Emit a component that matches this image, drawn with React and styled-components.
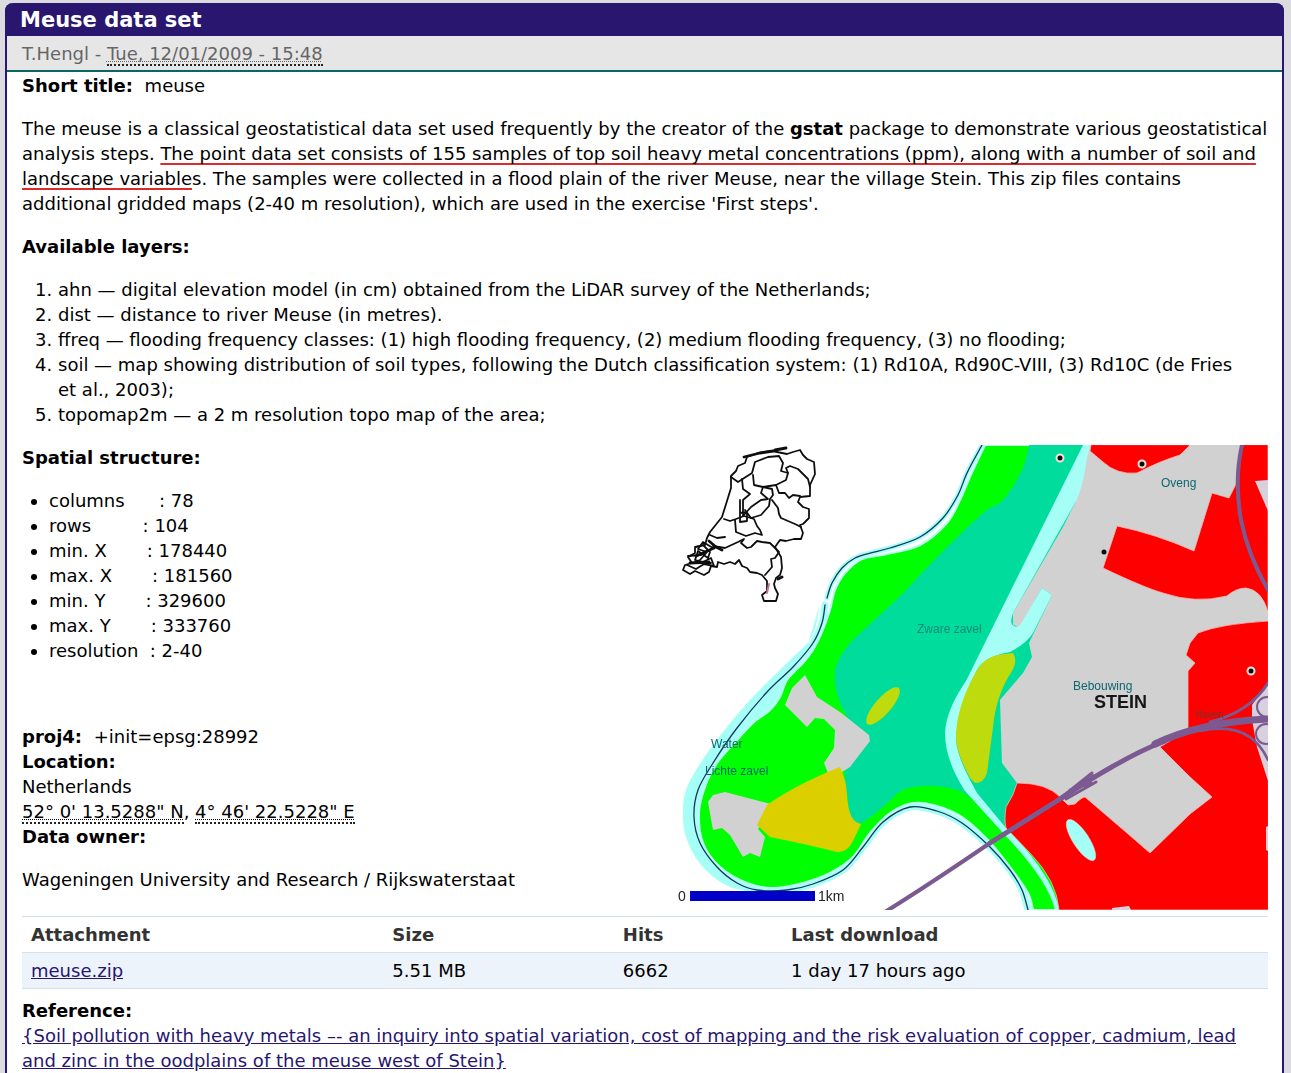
import React from "react";
import styled, { createGlobalStyle } from "styled-components";

const GlobalStyle = createGlobalStyle`
  * { box-sizing: border-box; }
  body {
    margin: 0;
    background: #dcdce0;
    color: #000;
    font-family: Verdana, "DejaVu Sans", sans-serif;
    font-size: 18px;
    line-height: 25px;
  }
`;

const Page = styled.div`
  display: flex;
  min-height: 100vh;
  padding: 3px 7px 0 5px;
`;

const Panel = styled.article`
  flex: 1;
  min-width: 0;
  background: #fff;
  border: solid #28166f;
  border-width: 0 2px;
  border-radius: 8px 8px 0 0;
`;

const Title = styled.h1`
  margin: 0 -2px;
  padding: 5px 15px 3px;
  border-radius: 8px 8px 0 0;
  background: #28166f;
  color: #fff;
  font-size: 21px;
  line-height: 25px;
`;

const Meta = styled.div`
  padding: 5px 15px 4px;
  background: #e6e6e6;
  color: #666;
  border-bottom: 2px solid #0b6661;
`;

const Abbr = styled.abbr`
  text-decoration: underline dotted 1px;
  text-decoration-skip-ink: none;
  border-bottom: 2px dotted #222;
`;

const Content = styled.div`
  padding: 1px 14px 0 15px;
`;

const Paragraph = styled.p`
  margin: ${(p) => (p.$flush ? "0" : "18px 0")};
`;

const Marked = styled.span`
  text-decoration: underline 2px #dd2a2a;
  text-decoration-skip-ink: none;
  text-underline-offset: 3px;
`;

const Value = styled.span`
  margin-left: 6px;
`;

const Numbered = styled.ol`
  margin: 18px 0;
  padding-left: 36px;
`;

const Bulleted = styled.ul`
  margin: 18px 0 61px;
  padding-left: 27px;
`;

const Item = styled.li`
  white-space: pre-wrap;
`;

const Split = styled.section`
  display: flex;
  justify-content: space-between;
  margin-bottom: 6px;
`;

const Details = styled.div`
  flex: 1;
  min-width: 0;
`;

const MapImage = styled.svg`
  display: block;
  flex: none;
  width: 590px;
  height: 465px;
`;

const MapText = styled.text`
  font-family: "Liberation Sans", Arial, sans-serif;
  font-size: ${(p) => p.$size || 12}px;
  font-weight: ${(p) => (p.$bold ? 700 : 400)};
  fill: ${(p) => p.$color || "#0d6670"};
`;

const Table = styled.table`
  width: 100%;
  border-collapse: collapse;
  margin-bottom: 9px;
`;

const HeadCell = styled.th`
  width: ${(p) => p.$width};
  padding: 5px 9px;
  color: #333;
  text-align: left;
  border: solid #d3e1ea;
  border-width: 1px 0;
`;

const Cell = styled.td`
  padding: 5px 9px;
  background: #edf3fa;
  border-bottom: 1px solid #d3e1ea;
`;

const Link = styled.a`
  color: #28166f;
`;

const poly = (points, close = true) =>
  "M" + points.map((p) => p.join(" ")).join("L") + (close ? "Z" : "");

/* Catmull-Rom spline through the given points. */
const curve = (pts) => {
  let d = `M${pts[0].join(" ")}`;
  for (let i = 0; i < pts.length - 1; i += 1) {
    const a = pts[i - 1] || pts[i];
    const b = pts[i];
    const c = pts[i + 1];
    const e = pts[i + 2] || c;
    d += `C${b[0] + (c[0] - a[0]) / 6} ${b[1] + (c[1] - a[1]) / 6} ${c[0] - (e[0] - b[0]) / 6} ${c[1] - (e[1] - b[1]) / 6} ${c[0]} ${c[1]}`;
  }
  return d;
};

const bank = [
  [985,445],[970,477],[960,500],[947,523],[920,545],[887,554],[862,559],[845,573],[835,590],[830,610],
  [822,632],[813,650],[803,663],[787,680],[780,697],[770,710],[753,723],[737,740],[717,763],[705,787],
  [699,813],[703,843],[720,867],[747,883],[773,888],[803,883],[830,873],[853,857],[870,833],[890,813],
  [913,803],[937,806],[962,817],[987,839],[1010,867],[1028,893],[1033,910],
];
const dikeNorth = [
  [982,445],[967,473],[958,495],[943,518],[920,537],[890,548],[870,553],[855,558],[842,568],[832,583],[827,598],
];
const dikeSouth = [
  [825,605],[822,623],[813,643],[793,667],[767,692],[737,728],[713,763],[698,790],[694,817],[700,843],
  [717,867],[737,883],[757,890],[787,890],[813,884],[843,870],[863,847],[883,822],[910,807],[937,811],
  [962,823],[990,847],[1010,870],[1022,890],[1028,910],
];
const water = [
  [820,604],[816,625],[809,641],[787,663],[750,700],[713,745],[688,785],[683,813],[687,840],[703,867],[730,887],[765,893],
];
const teal = [
  [1029,445],[1022,470],[1003,500],[983,513],[937,557],[903,593],[870,624],[850,643],[837,663],[835,683],
  [840,703],[850,725],[848,750],[845,775],[848,800],[851,818],[861,823],[883,807],[903,790],[930,786],[957,790],[975,802],[1004,834],
];

const provinces = [
  [[731,488],[731,476],[736,471],[738,466],[745,463],[747,457],[758,453],[772,451],[787,454],[793,452],[800,450],[803,455],[807,459],[814,462],[815,474],[810,485],[810,496],[800,497],[798,502],[803,507],[809,509],[809,518],[803,524],[800,525],[803,533],[801,539],[794,539],[786,541],[780,540],[775,547],[781,557],[782,568],[780,575],[776,578],[774,584],[775,588],[778,594],[776,601],[764,601],[762,595],[767,591],[767,581],[762,575],[757,573],[750,572],[747,568],[742,566],[739,560],[735,564],[730,562],[724,564],[718,562],[717,567],[711,566],[709,572],[704,575],[695,571],[690,574],[683,570],[685,565],[692,563],[688,557],[695,553],[695,547],[705,545],[707,538],[710,532],[722,517],[727,501]],
  [[731,477],[738,482],[752,473],[755,462],[768,457],[779,456],[783,463],[781,471],[788,473],[786,480],[776,485],[763,487],[754,485],[753,475]],
  [[788,473],[786,468],[790,466],[798,469],[808,479],[810,487]],
  [[776,485],[779,493],[785,493],[789,498],[793,495],[800,496]],
  [[742,479],[743,489],[750,494],[743,500],[743,516],[751,507],[761,500],[768,499],[761,493],[763,487]],
  [[763,487],[772,489],[773,495],[770,499],[769,506],[761,515],[751,518],[745,510]],
  [[724,519],[730,521],[736,519],[744,516],[754,519],[757,526],[760,530],[762,535],[755,533],[746,536],[736,532],[735,520]],
  [[772,500],[778,508],[779,514],[781,518],[795,524],[801,527]],
  [[713,546],[725,548],[738,542],[744,539],[741,543],[747,548],[751,547],[757,541],[762,542],[770,543],[779,552],[775,558],[771,559],[772,567],[765,575]],
  [[710,535],[717,538],[725,537]],
  [[696,547],[703,545],[710,552],[708,558],[698,551],[695,560],[703,562],[711,558],[714,566],[704,564],[696,569],[687,565]],
  [[688,556],[701,555],[713,548],[703,542],[698,549],[707,552],[700,560],[693,563],[711,563]],
  [[740,513],[747,512],[747,521],[740,522],[740,500]],
];

function MeuseMap() {
  return (
    <MapImage viewBox="678 445 590 465" role="img" aria-label="Map of the Meuse study area near Stein">
      <defs>
        <filter id="soft" x="0" y="0" width="100%" height="100%">
          <feGaussianBlur stdDeviation="0.5" />
        </filter>
      </defs>
      <g filter="url(#soft)" strokeLinejoin="round" strokeLinecap="round">
        <rect x="678" y="445" width="590" height="465" fill="#fff" />
        <g fill="none" stroke="#a6fff6">
          <path d={curve(dikeNorth)} strokeWidth="5" />
          <path d={curve(dikeSouth)} strokeWidth="7" />
        </g>
        <path d={`${curve(water)}L800 830L800 670Z`} fill="#a6fff6" />
        <path d={`${curve(bank)}L1268 910L1268 445Z`} fill="#00ff00" stroke="#b8fff2" strokeWidth="2" />
        <path d={`${curve(dikeNorth)}${curve(dikeSouth)}`} fill="none" stroke="#17375e" strokeWidth="1.3" />
        <path d={`${curve(teal)}L1100 820L1100 445Z`} fill="#05dc9b" />

        <path
          d={poly([[1088,445],[1087,453],[1075,503],[1063,527],[1013,613],[1013,625],[1020,627],[1042,588],[1052,595],[1029,643],[1032,657],[1023,673],[1000,700],[1002,763],[1017,783],[1060,830],[1150,870],[1268,870],[1268,445]])}
          fill="#d1d1d1"
        />
        <path
          d="M1083 445L1091 445L1087 457Q1083 488 1075 503L1013 613Q1009 624 1014 626Q1019 628 1022 622L1042 588L1052 595L1033 633Q1027 643 1010 652Q985 656 977 670Q957 709 956 740Q957 755 970 780L977 793L1006 828Q1053 875 1059 910L1055 910Q1048 880 1003 833L965 791Q945 760 945 733Q946 710 966 681Z"
          fill="#a6fff6"
        />
        <path
          d="M977 670Q986 655 1005 654L1013 653Q1018 660 1012 671Q996 695 993 727L987 773Q984 783 975 783L970 778Q955 750 956 735Q957 705 977 670Z"
          fill="#bddb08"
        />

        <g fill="#ff0000" stroke="#f4b8b0" strokeWidth="0.8">
          <path d="M1091 445L1090 451L1103 462Q1117 475 1137 473Q1160 461 1180 455L1190 445Z" />
          <path d="M1241 445L1238 480L1229 498L1212 493L1194 551Q1156 534 1117 526L1103 568Q1145 588 1163 593Q1195 604 1227 596Q1236 588 1246 588Q1262 590 1268 612L1268 445Z" />
          <path d="M1268 621Q1220 624 1198 633L1190 643L1186 655L1195 663L1188 671V730L1160 747L1190 777L1212 797L1190 814L1150 853L1127 833L1085 797Q1082 797 1075 804L1068 805L1060 797Q1047 783 1017 783Q1014 795 1006 807Q1004 820 1006 828L1030 853Q1057 881 1059 910L1268 910Z" />
        </g>
        <g fill="#d6d1dc">
          <path d="M1255 481L1268 480V511Z" />
          <path d="M1268 683L1252 705L1252 720L1257 747L1268 781Z" />
          <path d="M1268 826L1266 827V850L1268 851Z" />
          <path d="M1112 908L1129 906L1131 910H1112Z" />
        </g>
        <ellipse cx="1081" cy="840" rx="8" ry="24" transform="rotate(-33 1081 840)" fill="#a6fff6" stroke="#e7c7c0" strokeWidth="0.6" />

        <path
          d={poly([[805,675],[817,697],[840,712],[869,735],[870,741],[850,767],[842,772],[828,773],[824,763],[834,748],[835,730],[824,719],[815,718],[807,727],[785,705],[792,688]])}
          fill="#d1d1d1"
        />
        <path
          d={poly([[725,792],[763,802],[775,805],[758,829],[765,837],[760,857],[750,853],[743,857],[730,835],[722,828],[713,830],[708,802],[713,795]])}
          fill="#d1d1d1"
        />
        <path
          d="M840 767Q846 779 847 794Q848 822 861 824L853 841Q847 853 837 852Q810 845 770 837L757 825L767 805Q795 785 840 767Z"
          fill="#dccf00"
        />
        <ellipse cx="883" cy="706" rx="8" ry="24" transform="rotate(41 883 706)" fill="#bddb08" />

        <g fill="none" stroke="#7b5a91">
          <path d="M885 912Q930 884 990 843L1060 799" strokeWidth="4" />
          <path d="M990 843L1060 799L1093 777" strokeWidth="5" />
          <path d="M1060 799Q1125 756 1165 741" strokeWidth="5" />
          <path d="M1155 744Q1200 722 1268 719" strokeWidth="7" />
          <path d="M1062 797L1092 773M1066 799L1096 782M1070 790L1091 783" strokeWidth="3" />
          <path d="M1210 722Q1250 712 1268 683" strokeWidth="3" />
          <path d="M1200 731Q1250 720 1268 760" strokeWidth="2.5" />
          <path d="M1242 445Q1234 480 1241 520Q1248 555 1268 590" strokeWidth="4" />
          <circle cx="1267" cy="707" r="10" strokeWidth="2" />
          <circle cx="1266" cy="734" r="10" strokeWidth="2" />
        </g>

        <g fill="#111" stroke="#f5e0dc" strokeWidth="2">
          <circle cx="1060" cy="458" r="3.5" />
          <circle cx="1142" cy="464" r="3.5" />
          <circle cx="1251" cy="671" r="3.5" />
        </g>
        <circle cx="1104" cy="552" r="2.5" fill="#111" />

        <g fill="none" stroke="#111" strokeWidth="1.8">
          {provinces.map((points, i) => (
            <path key={i} d={poly(points, i === 0)} />
          ))}
          <path d="M744 457L760 453L773 451M775 450L786 448M690 563L709 562M696 556L714 548M709 541L716 547L722 550M778 579L782 577" strokeWidth="2.8" />
        </g>
        <path d="M769 584L767 593" stroke="#c87882" strokeWidth="2" />

        <MapText x="711" y="748">Water</MapText>
        <MapText x="705" y="775">Lichte zavel</MapText>
        <MapText x="917" y="633" $color="#168879">Zware zavel</MapText>
        <MapText x="1161" y="487">Oveng</MapText>
        <MapText x="1073" y="690">Bebouwing</MapText>
        <MapText x="1195" y="718" $size={10} $color="#713333">Haven</MapText>
        <MapText x="1094" y="708" $size={18} $bold $color="#151515">STEIN</MapText>
        <rect x="690" y="891" width="125" height="10" fill="#0505c8" />
        <MapText x="678" y="901" $size={14} $color="#222">0</MapText>
        <MapText x="818" y="901" $size={14} $color="#222">1km</MapText>
      </g>
    </MapImage>
  );
}

const layers = [
  "ahn — digital elevation model (in cm) obtained from the LiDAR survey of the Netherlands;",
  "dist — distance to river Meuse (in metres).",
  "ffreq — flooding frequency classes: (1) high flooding frequency, (2) medium flooding frequency, (3) no flooding;",
  "soil — map showing distribution of soil types, following the Dutch classification system: (1) Rd10A, Rd90C-VIII, (3) Rd10C (de Fries et\u00a0al., 2003);",
  "topomap2m — a 2 m resolution topo map of the area;",
];

const structure = [
  "columns      : 78",
  "rows         : 104",
  "min. X       : 178440",
  "max. X       : 181560",
  "min. Y       : 329600",
  "max. Y       : 333760",
  "resolution  : 2-40",
];

export default function App() {
  return (
    <>
      <GlobalStyle />
      <Page>
        <Panel>
          <Title>Meuse data set</Title>
          <Meta>
            T.Hengl - <Abbr>Tue, 12/01/2009 - 15:48</Abbr>
          </Meta>
          <Content>
            <Paragraph $flush>
              <strong>Short title:</strong> <Value>meuse</Value>
            </Paragraph>
            <Paragraph>
              The meuse is a classical geostatistical data set used frequently by the creator of the{" "}
              <strong>gstat</strong> package to demonstrate various geostatistical analysis steps.{" "}
              <Marked>
                The point data set consists of 155 samples of top soil heavy metal concentrations (ppm),
                along with a number of soil and
              </Marked>{" "}
              <Marked>landscape variable</Marked>s. The samples were collected in a flood plain of the
              river Meuse, near the village Stein. This zip files contains additional gridded maps (2-40 m
              resolution), which are used in the exercise 'First steps'.
            </Paragraph>
            <Paragraph>
              <strong>Available layers:</strong>
            </Paragraph>
            <Numbered>
              {layers.map((text) => (
                <Item key={text}>{text}</Item>
              ))}
            </Numbered>
            <Split>
              <Details>
                <Paragraph $flush>
                  <strong>Spatial structure:</strong>
                </Paragraph>
                <Bulleted>
                  {structure.map((text) => (
                    <Item key={text}>{text}</Item>
                  ))}
                </Bulleted>
                <Paragraph $flush>
                  <strong>proj4:</strong> <Value>+init=epsg:28992</Value>
                </Paragraph>
                <Paragraph $flush>
                  <strong>Location:</strong>
                </Paragraph>
                <Paragraph $flush>Netherlands</Paragraph>
                <Paragraph $flush>
                  <Abbr>52° 0' 13.5288" N</Abbr>, <Abbr>4° 46' 22.5228" E</Abbr>
                </Paragraph>
                <Paragraph $flush>
                  <strong>Data owner:</strong>
                </Paragraph>
                <Paragraph>Wageningen University and Research / Rijkswaterstaat</Paragraph>
              </Details>
              <MeuseMap />
            </Split>
            <Table>
              <thead>
                <tr>
                  <HeadCell $width="29%">Attachment</HeadCell>
                  <HeadCell $width="18.5%">Size</HeadCell>
                  <HeadCell $width="13.5%">Hits</HeadCell>
                  <HeadCell>Last download</HeadCell>
                </tr>
              </thead>
              <tbody>
                <tr>
                  <Cell>
                    <Link href="#meuse.zip">meuse.zip</Link>
                  </Cell>
                  <Cell>5.51 MB</Cell>
                  <Cell>6662</Cell>
                  <Cell>1 day 17 hours ago</Cell>
                </tr>
              </tbody>
            </Table>
            <Paragraph $flush>
              <strong>Reference:</strong>
            </Paragraph>
            <Paragraph $flush>
              <Link href="#reference">
                {"{Soil pollution with heavy metals –- an inquiry into spatial variation, cost of mapping and the risk evaluation of copper, cadmium, lead and zinc in the oodplains of the meuse west of Stein}"}
              </Link>
            </Paragraph>
          </Content>
        </Panel>
      </Page>
    </>
  );
}
